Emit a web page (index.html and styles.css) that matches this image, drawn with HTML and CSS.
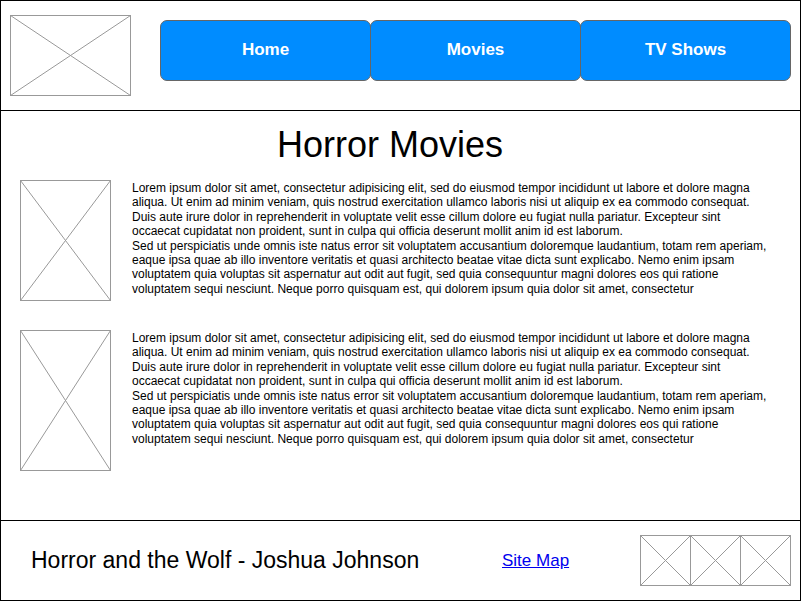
FILE: index.html
```html
<!DOCTYPE html>
<html lang="en">
<head>
<meta charset="utf-8">
<title>Horror Movies</title>
<link rel="stylesheet" href="styles.css">
</head>
<body>
<div class="page">
  <header class="header">
    <svg class="ph logo" width="121" height="81" viewBox="0 0 121 81" preserveAspectRatio="none">
      <rect x="0.5" y="0.5" width="120" height="80"/>
      <line x1="0.5" y1="0.5" x2="120.5" y2="80.5"/>
      <line x1="120.5" y1="0.5" x2="0.5" y2="80.5"/>
    </svg>
    <nav class="nav">
      <a class="nav-btn" href="#">Home</a>
      <a class="nav-btn" href="#">Movies</a>
      <a class="nav-btn" href="#">TV Shows</a>
    </nav>
  </header>

  <main class="main">
    <h1 class="title">Horror Movies</h1>

    <article class="item">
      <svg class="ph" width="91" height="121" viewBox="0 0 91 121" preserveAspectRatio="none">
        <rect x="0.5" y="0.5" width="90" height="120"/>
        <line x1="0.5" y1="0.5" x2="90.5" y2="120.5"/>
        <line x1="90.5" y1="0.5" x2="0.5" y2="120.5"/>
      </svg>
      <p class="text">Lorem ipsum dolor sit amet, consectetur adipisicing elit, sed do eiusmod tempor incididunt ut labore et dolore magna aliqua. Ut enim ad minim veniam, quis nostrud exercitation ullamco laboris nisi ut aliquip ex ea commodo consequat. Duis aute irure dolor in reprehenderit in voluptate velit esse cillum dolore eu fugiat nulla pariatur. Excepteur sint occaecat cupidatat non proident, sunt in culpa qui officia deserunt mollit anim id est laborum.<br>Sed ut perspiciatis unde omnis iste natus error sit voluptatem accusantium doloremque laudantium, totam rem aperiam, eaque ipsa quae ab illo inventore veritatis et quasi architecto beatae vitae dicta sunt explicabo. Nemo enim ipsam voluptatem quia voluptas sit aspernatur aut odit aut fugit, sed quia consequuntur magni dolores eos qui ratione voluptatem sequi nesciunt. Neque porro quisquam est, qui dolorem ipsum quia dolor sit amet, consectetur</p>
    </article>

    <article class="item item-second">
      <svg class="ph" width="91" height="141" viewBox="0 0 91 141" preserveAspectRatio="none">
        <rect x="0.5" y="0.5" width="90" height="140"/>
        <line x1="0.5" y1="0.5" x2="90.5" y2="140.5"/>
        <line x1="90.5" y1="0.5" x2="0.5" y2="140.5"/>
      </svg>
      <p class="text">Lorem ipsum dolor sit amet, consectetur adipisicing elit, sed do eiusmod tempor incididunt ut labore et dolore magna aliqua. Ut enim ad minim veniam, quis nostrud exercitation ullamco laboris nisi ut aliquip ex ea commodo consequat. Duis aute irure dolor in reprehenderit in voluptate velit esse cillum dolore eu fugiat nulla pariatur. Excepteur sint occaecat cupidatat non proident, sunt in culpa qui officia deserunt mollit anim id est laborum.<br>Sed ut perspiciatis unde omnis iste natus error sit voluptatem accusantium doloremque laudantium, totam rem aperiam, eaque ipsa quae ab illo inventore veritatis et quasi architecto beatae vitae dicta sunt explicabo. Nemo enim ipsam voluptatem quia voluptas sit aspernatur aut odit aut fugit, sed quia consequuntur magni dolores eos qui ratione voluptatem sequi nesciunt. Neque porro quisquam est, qui dolorem ipsum quia dolor sit amet, consectetur</p>
    </article>
  </main>

  <footer class="footer">
    <div class="credit">Horror and the Wolf - Joshua Johnson</div>
    <a class="sitemap" href="#">Site Map</a>
    <div class="badges">
      <svg class="ph badge" width="51" height="51" viewBox="0 0 51 51">
        <rect x="0.5" y="0.5" width="50" height="50"/>
        <line x1="0.5" y1="0.5" x2="50.5" y2="50.5"/>
        <line x1="50.5" y1="0.5" x2="0.5" y2="50.5"/>
      </svg>
      <svg class="ph badge" width="51" height="51" viewBox="0 0 51 51">
        <rect x="0.5" y="0.5" width="50" height="50"/>
        <line x1="0.5" y1="0.5" x2="50.5" y2="50.5"/>
        <line x1="50.5" y1="0.5" x2="0.5" y2="50.5"/>
      </svg>
      <svg class="ph badge" width="51" height="51" viewBox="0 0 51 51">
        <rect x="0.5" y="0.5" width="50" height="50"/>
        <line x1="0.5" y1="0.5" x2="50.5" y2="50.5"/>
        <line x1="50.5" y1="0.5" x2="0.5" y2="50.5"/>
      </svg>
    </div>
  </footer>
</div>
</body>
</html>
```

FILE: styles.css
```css
* {
  box-sizing: border-box;
}

html, body {
  margin: 0;
  padding: 0;
  background: #fff;
}

body {
  font-family: "Liberation Sans", Arial, Helvetica, sans-serif;
  color: #000;
}

.page {
  width: 801px;
  height: 601px;
  border: 1px solid #000;
  display: flex;
  flex-direction: column;
}

/* placeholder images */
.ph {
  display: block;
  flex: none;
}
.ph rect {
  fill: #fff;
  stroke: #999;
  stroke-width: 1;
}
.ph line {
  stroke: #999;
  stroke-width: 1;
}

/* header */
.header {
  height: 110px;
  flex: none;
  border-bottom: 1px solid #000;
  display: flex;
  align-items: flex-start;
  padding-left: 9px;
}

.logo {
  margin-top: 14px;
}

.nav {
  display: flex;
  margin-top: 19px;
  margin-left: 29px;
}

.nav-btn {
  width: 211px;
  height: 61px;
  display: flex;
  align-items: center;
  justify-content: center;
  background: #008cff;
  border: 1px solid #666;
  border-radius: 7px;
  color: #fff;
  font-weight: bold;
  font-size: 17px;
  text-decoration: none;
  padding-bottom: 2px;
}
.nav-btn + .nav-btn {
  margin-left: -1px;
}

/* main */
.main {
  flex: 1;
  padding: 13px 0 0 19px;
}

.title {
  margin: 0;
  font-weight: normal;
  font-size: 36px;
  line-height: 42px;
  text-align: center;
  padding-right: 40px;
}

.item {
  display: flex;
  align-items: flex-start;
  margin-top: 14px;
}
.item-second {
  margin-top: 29px;
}

.text {
  margin: 1px 0 0 21px;
  width: 636px;
  font-size: 12px;
  line-height: 14.4px;
}

/* footer */
.footer {
  height: 80px;
  flex: none;
  border-top: 1px solid #000;
  display: flex;
  align-items: center;
  padding: 0 9px 0 30px;
}

.credit {
  width: 471px;
  font-size: 23px;
}

.sitemap {
  font-size: 17px;
  color: #0000ee;
}

.badges {
  display: flex;
  margin-left: auto;
}
.badge + .badge {
  margin-left: -1px;
}
```
